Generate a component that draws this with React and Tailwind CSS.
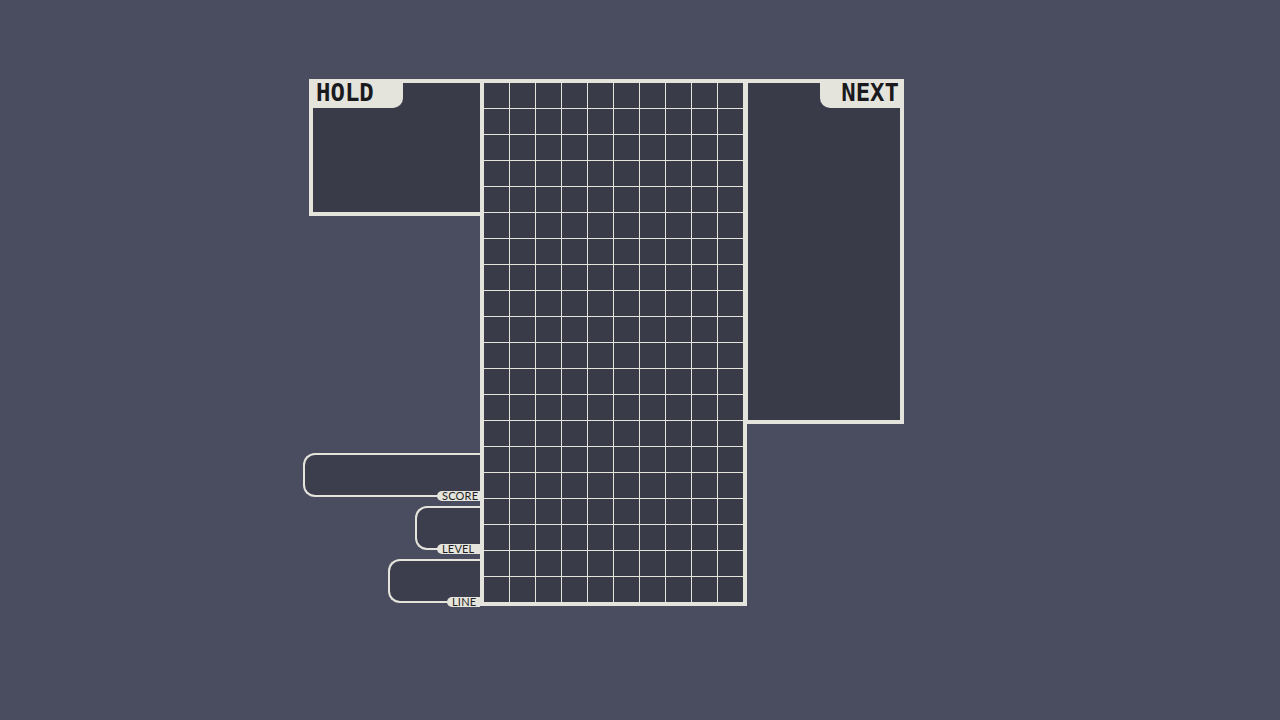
import React from "react";

const LIGHT = "border-[#e4e4dc]";

function StatBox({ label, width, labelWidth }) {
  return (
    <div
      className={`relative h-[44px] border-2 border-r-0 ${LIGHT} rounded-l-[12px] bg-[#3c3e4e]`}
      style={{ width }}
    >
      <div
        className="absolute right-0 bottom-[-6px] h-[10px] rounded-l-full bg-[#e4e4dc] text-[#1e1f24] text-[11px] leading-[10px] pl-[5px] tracking-[0.2px]"
        style={{ width: labelWidth, fontFamily: "Lato, 'Open Sans', sans-serif" }}
      >
        {label}
      </div>
    </div>
  );
}

export default function App() {
  const cells = Array.from({ length: 200 });
  const mono = { fontFamily: "'DejaVu Sans Mono', 'Liberation Mono', monospace" };
  return (
    <div className="w-[1280px] h-[720px] bg-[#4a4d5f] pt-[79px] pl-[303px] flex items-start">
      {/* left column */}
      <div className="w-[177px] h-[527px] flex flex-col items-end">
        <div className={`w-[171px] h-[137px] border-l-4 border-t-4 border-b-4 ${LIGHT} bg-[#393b48]`}>
          <div
            className="w-[90px] h-[25px] bg-[#e4e4dc] rounded-br-[10px] pl-[3px] text-[24px] font-bold leading-[20px] text-[#1a1a1e]"
            style={mono}
          >
            HOLD
          </div>
        </div>
        <div className="mt-auto flex flex-col items-end gap-[9px] pb-[3px]">
          <StatBox label="SCORE" width={177} labelWidth={43} />
          <StatBox label="LEVEL" width={65} labelWidth={43} />
          <StatBox label="LINE" width={92} labelWidth={33} />
        </div>
      </div>

      {/* board */}
      <div className={`w-[267px] h-[527px] border-4 ${LIGHT} bg-[#e4e4dc] grid grid-cols-[repeat(10,25px)] grid-rows-[repeat(20,25px)] gap-px`}>
        {cells.map((_, i) => (
          <div key={i} className="bg-[#393b48]" />
        ))}
      </div>

      {/* next */}
      <div className={`-ml-[3px] w-[160px] h-[345px] border-4 ${LIGHT} bg-[#393b48] flex flex-col items-end`}>
        <div
          className="w-[80px] h-[25px] bg-[#e4e4dc] rounded-bl-[10px] pr-[1px] text-right text-[24px] font-bold leading-[20px] text-[#1a1a1e]"
          style={mono}
        >
          NEXT
        </div>
      </div>
    </div>
  );
}
